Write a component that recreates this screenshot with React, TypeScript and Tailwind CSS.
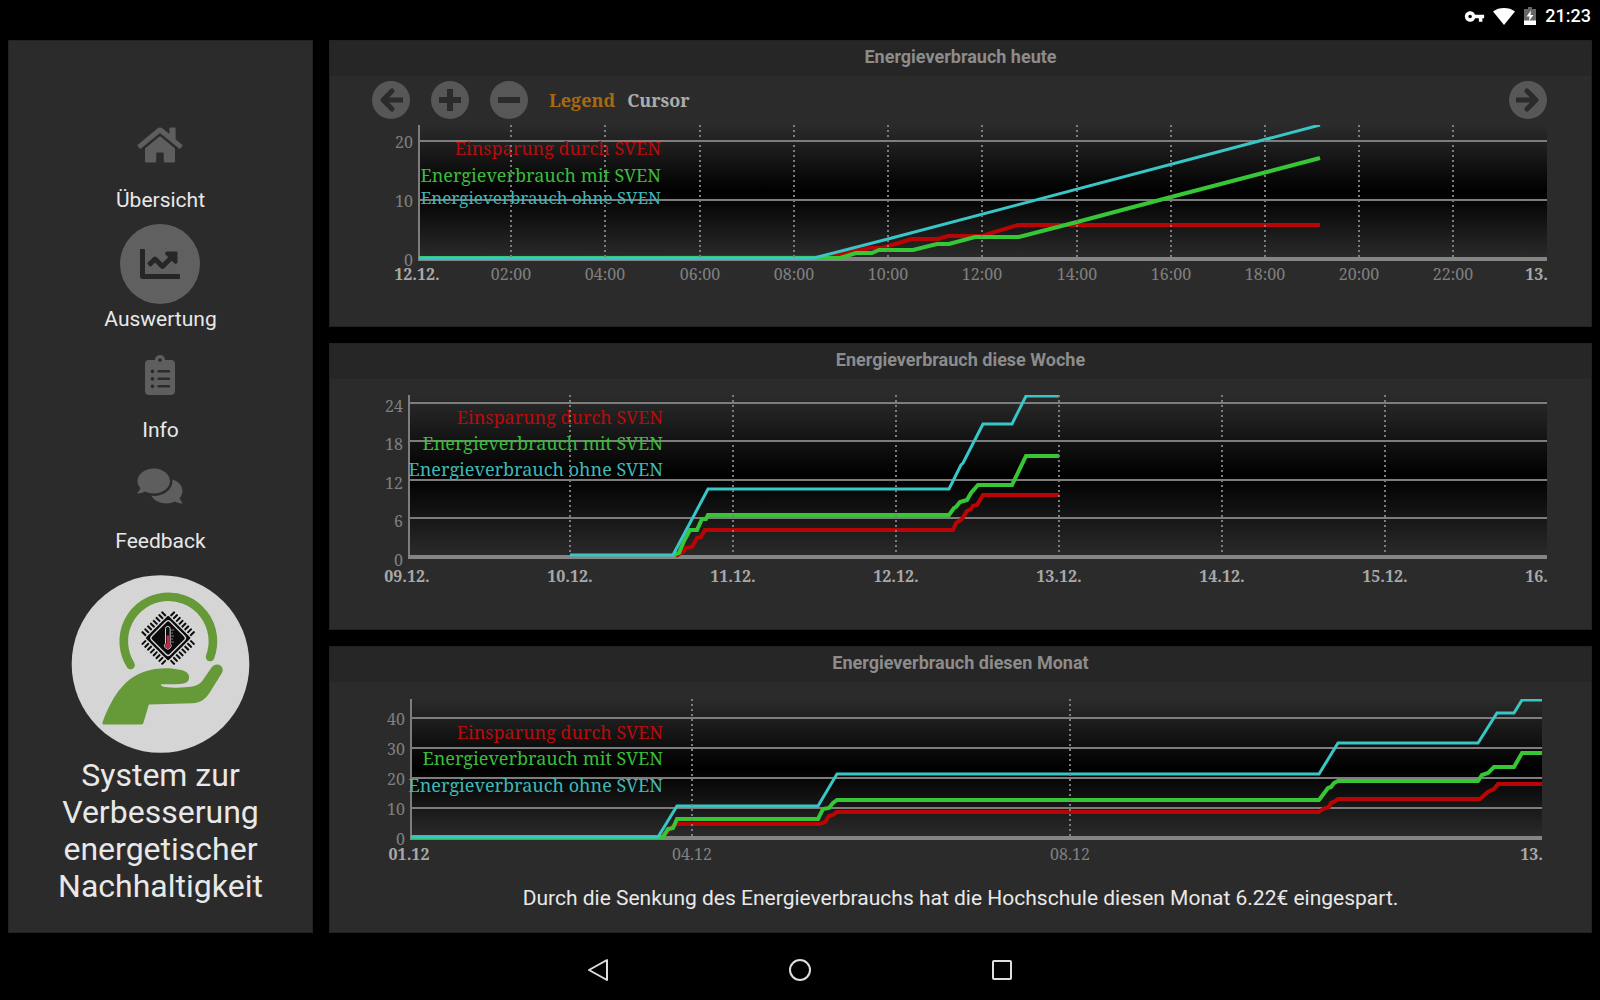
import type { ReactNode } from "react";
import { FaChartLine, FaClipboardList, FaComments, FaHome } from "react-icons/fa";
import { MdVpnKey } from "react-icons/md";

type Tick = { at: number; label: string; bold?: boolean; grid?: boolean; end?: boolean };

type ChartProps = {
  id: string;
  label: string;
  viewBox: string;
  plot: { left: number; right: number; top: number; base: number };
  yTicks: { at: number; label: string }[];
  yLabelDrop: number;
  xTicks: Tick[];
  xLabelY: number;
  legendX: number;
  legendY: [number, number, number];
  tightLegend?: boolean;
  series: { saved: string; withSven: string; withoutSven: string };
};

const serif = "font-['Noto_Serif','DejaVu_Serif_Condensed','DejaVu_Serif',serif]";

function Chart(props: ChartProps) {
  const { id, label, viewBox, plot, yTicks, yLabelDrop, xTicks, xLabelY, legendX, legendY, tightLegend, series } = props;
  const { left, right, top, base } = plot;
  return (
    <svg viewBox={viewBox} role="img" aria-label={label} className={`block w-full ${serif}`}>
      <defs>
        <linearGradient id={`${id}-bg`} x1="0" y1="0" x2="0" y2="1">
          <stop offset="0" stopColor="#2b2b2b" />
          <stop offset="0.5" stopColor="#000000" />
          <stop offset="1" stopColor="#2b2b2b" />
        </linearGradient>
        <clipPath id={`${id}-clip`}>
          <rect x={left - 1} y={top} width={right - left + 1} height={base - top + 2} />
        </clipPath>
      </defs>
      <rect x={left} y={top} width={right - left} height={base - top} fill={`url(#${id}-bg)`} />
      {yTicks.map((t) => (
        <g key={t.label}>
          {t.at !== base && <path d={`M${left - 1} ${t.at}H${right}`} stroke="#7d7d7d" strokeWidth="2" />}
          <text x={left - 6} y={t.at + yLabelDrop} textAnchor="end" className="fill-[#808080] text-[16px]">
            {t.label}
          </text>
        </g>
      ))}
      <path d={`M${left} ${top}V${base}`} stroke="#7d7d7d" strokeWidth="2" />
      <path d={`M${left - 1} ${base}H${right}`} stroke="#858585" strokeWidth="4" />
      {xTicks.map((t) => (
        <text
          key={t.label}
          x={t.at}
          y={xLabelY}
          textAnchor={t.end ? "end" : "middle"}
          className={t.bold ? "fill-[#a8a8a8] text-[16px] font-bold" : "fill-[#808080] text-[16px]"}
        >
          {t.label}
        </text>
      ))}
      <g className="text-[18px]" textAnchor="end">
        <text x={legendX} y={legendY[0]} className="fill-[#b80c0c]">Einsparung durch SVEN</text>
        <text x={legendX} y={legendY[1]} className="fill-[#3cbc3c]">Energieverbrauch mit SVEN</text>
        <text x={legendX} y={legendY[2]} className={tightLegend ? "fill-[#3fb8b8] text-[17px]" : "fill-[#3fb8b8]"}>
          Energieverbrauch ohne SVEN
        </text>
      </g>
      <g fill="none" strokeWidth="4" clipPath={`url(#${id}-clip)`}>
        <polyline points={series.saved} stroke="#bb0505" />
        <polyline points={series.withSven} stroke="#36c636" />
        <polyline points={series.withoutSven} stroke="#38c6c6" strokeWidth="3" />
      </g>
      {xTicks.filter((t) => t.grid).map((t) => (
        <path key={t.label} d={`M${t.at} ${top}V${base - 2}`} stroke="#7c7c7c" strokeWidth="2" strokeDasharray="2 3" />
      ))}
    </svg>
  );
}

function Panel({ title, children }: { title: string; children: ReactNode }) {
  return (
    <section className="flex flex-1 flex-col border border-[#222222] bg-[#2b2b2b]">
      <h2 className="bg-[#262626] pb-1 text-center text-[18px] leading-[31px] font-bold text-[#8c8c8c]">{title}</h2>
      {children}
    </section>
  );
}

function RoundButton({ label, end, children }: { label: string; end?: boolean; children: ReactNode }) {
  return (
    <button type="button" aria-label={label} className={end ? "ml-auto rounded-full" : "rounded-full"}>
      <svg viewBox="-19 -19 38 38" className="block size-[38px]" fill="none" stroke="#2b2b2b" strokeWidth="5">
        <circle r="19" fill="#575757" stroke="none" />
        {children}
      </svg>
    </button>
  );
}

function NavItem({ icon, label, active }: { icon: ReactNode; label: string; active?: boolean }) {
  return (
    <button type="button" aria-current={active ? "page" : undefined} className="flex flex-col items-center">
      <span
        className={
          active
            ? "flex size-20 items-center justify-center rounded-full bg-[#606060] text-[#262626]"
            : "flex size-20 items-center justify-center text-[#5e5e5e]"
        }
      >
        {icon}
      </span>
      <span className="text-[21px] leading-[31px]">{label}</span>
    </button>
  );
}

const pins = [-42, -30, -18, -6, 6, 18, 30, 42];

function Logo() {
  return (
    <svg viewBox="92 43 538 534" role="img" aria-label="SVEN Logo" className="h-[178px] w-[179px]">
      <circle cx="361" cy="310" r="267" fill="#d5d5d5" />
      <path d="M271 313A134 134 0 1 1 510 289" fill="none" stroke="#669938" strokeWidth="26" strokeLinecap="round" />
      <path
        fill="#669938"
        d="M187 484C202 445 217 415 236 390C256 364 280 343 312 333C338 324 372 321 400 324C428 327 447 332 447 350C447 364 436 370 418 370C400 371 382 370 362 371C363 376 366 378 374 379C398 382 432 382 456 378C476 374 484 366 492 353L514 321C522 310 534 309 542 315C549 321 550 329 545 338L510 394C498 413 483 427 456 428L326 432L310 486C309 490 307 492 303 492H192C187 492 186 489 187 484Z"
      />
      <g transform="translate(384 232) rotate(45)">
        {[0, 90, 180, 270].map((angle) => (
          <g key={angle} transform={`rotate(${angle})`} fill="#0b0b0b">
            {pins.map((p) => (
              <rect key={p} x={p - 3} y="-70" width="6" height="18" rx="2" />
            ))}
          </g>
        ))}
        <rect x="-48" y="-48" width="96" height="96" rx="3" fill="#0b0b0b" />
        <rect x="-39" y="-39" width="78" height="78" rx="8" fill="none" stroke="#d5d5d5" strokeWidth="4" />
      </g>
      <path d="M376 248V204a7 7 0 0 1 14 0V248a10 10 0 1 1-14 0Z" fill="#0b0b0b" stroke="#d5d5d5" strokeWidth="3" />
      <path d="M383 224V254" stroke="#c02a4c" strokeWidth="7" />
      <circle cx="383" cy="256" r="8" fill="#c02a4c" />
      <path d="M393 208H402M393 217H399M393 226H402M393 235H399M393 244H402" stroke="#b5b5b5" strokeWidth="2" />
    </svg>
  );
}

export default function App() {
  return (
    <div className="flex min-h-screen flex-col bg-black font-[Roboto,sans-serif] text-[#e8e8e8]">
      <header className="flex h-10 items-start justify-end px-[9px] pt-1 text-white">
        <div className="flex h-6 items-center gap-2">
          <MdVpnKey className="size-[21px]" aria-label="VPN" />
          <svg viewBox="0 0 22 17" className="h-[17px] w-[22px]" role="img" aria-label="WLAN">
            <path d="M11 17L0 3.4C6 -1.1 16 -1.1 22 3.4Z" fill="currentColor" />
          </svg>
          <svg viewBox="0 0 12 18" className="mx-px h-[18px] w-3" role="img" aria-label="Akku wird geladen">
            <path d="M0 2H4V0H8V2H12V18H0Z" fill="#666666" />
            <path d="M0 13.5H12V18H0Z" fill="currentColor" />
            <path d="M7 3.5L2.5 9.5H5.5L5 14L9.5 8H6.5Z" fill="currentColor" />
          </svg>
          <time className="text-[18px] leading-6 font-medium">21:23</time>
        </div>
      </header>

      <main className="flex flex-1 gap-4 px-2">
        <aside className="flex w-[305px] shrink-0 flex-col items-center border border-[#222222] bg-[#2b2b2b] pt-16">
          <nav className="flex flex-col items-center">
            <div className="pb-2">
              <NavItem icon={<FaHome className="h-10 w-[46px]" />} label="Übersicht" />
            </div>
            <NavItem icon={<FaChartLine className="size-10" />} label="Auswertung" active />
            <NavItem icon={<FaClipboardList className="size-10" />} label="Info" />
            <NavItem icon={<FaComments className="h-10 w-[46px]" />} label="Feedback" />
          </nav>
          <div className="flex flex-col items-center pt-[18px]">
            <Logo />
            <p className="pt-1 text-center text-[32px] leading-[37px]">
              System zur
              <br />
              Verbesserung
              <br />
              energetischer
              <br />
              Nachhaltigkeit
            </p>
          </div>
        </aside>

        <div className="flex min-w-0 flex-1 flex-col gap-4">
          <Panel title="Energieverbrauch heute">
            <div className={`flex h-12 items-center gap-[21px] pr-11 pl-[42px] ${serif}`}>
              <RoundButton label="Zurück">
                <path d="M1 -9L-8 0L1 9" strokeLinecap="round" strokeLinejoin="round" />
                <path d="M-8 0H12" />
              </RoundButton>
              <RoundButton label="Vergrößern">
                <path d="M-11 0H11M0 -11V11" strokeWidth="6" />
              </RoundButton>
              <RoundButton label="Verkleinern">
                <path d="M-11 0H11" strokeWidth="6" />
              </RoundButton>
              <div className="flex gap-3 text-[18px] leading-6 font-bold">
                <button type="button" className="text-[#a86a10]">Legend</button>
                <button type="button" className="text-[#acacac]">Cursor</button>
              </div>
              <RoundButton label="Weiter" end>
                <path d="M-1 -9L8 0L-1 9" strokeLinecap="round" strokeLinejoin="round" />
                <path d="M8 0H-12" />
              </RoundButton>
            </div>
            <Chart
              id="today"
              label="Energieverbrauch heute"
              viewBox="330 124 1261 180"
              plot={{ left: 419, right: 1547, top: 125, base: 259 }}
              yTicks={[{ at: 141, label: "20" }, { at: 200, label: "10" }, { at: 259, label: "0" }]}
              yLabelDrop={7}
              xTicks={[
                { at: 417, label: "12.12.", bold: true },
                { at: 511, label: "02:00", grid: true },
                { at: 605, label: "04:00", grid: true },
                { at: 700, label: "06:00", grid: true },
                { at: 794, label: "08:00", grid: true },
                { at: 888, label: "10:00", grid: true },
                { at: 982, label: "12:00", grid: true },
                { at: 1077, label: "14:00", grid: true },
                { at: 1171, label: "16:00", grid: true },
                { at: 1265, label: "18:00", grid: true },
                { at: 1359, label: "20:00", grid: true },
                { at: 1453, label: "22:00", grid: true },
                { at: 1548, label: "13.", bold: true, end: true },
              ]}
              xLabelY={280}
              legendX={661}
              legendY={[155, 182, 204]}
              tightLegend
              series={{
                saved:
                  "419,258 820,257 840,254 846,252 861,250 870,248 882,248 912,239 938,239 948,236 982,236 1018,225 1320,225",
                withSven:
                  "419,258 840,258 856,253 872,253 879,250 913,250 937,244 949,244 975,237 1019,237 1077,222 1171,197 1320,158",
                withoutSven: "419,258 814,258 888,239 1320,125",
              }}
            />
          </Panel>

          <Panel title="Energieverbrauch diese Woche">
            <Chart
              id="week"
              label="Energieverbrauch diese Woche"
              viewBox="330 379 1261 220"
              plot={{ left: 409, right: 1547, top: 395, base: 557 }}
              yTicks={[
                { at: 403, label: "24" },
                { at: 441, label: "18" },
                { at: 480, label: "12" },
                { at: 518, label: "6" },
                { at: 557, label: "0" },
              ]}
              yLabelDrop={9}
              xTicks={[
                { at: 407, label: "09.12.", bold: true },
                { at: 570, label: "10.12.", bold: true, grid: true },
                { at: 733, label: "11.12.", bold: true, grid: true },
                { at: 896, label: "12.12.", bold: true, grid: true },
                { at: 1059, label: "13.12.", bold: true, grid: true },
                { at: 1222, label: "14.12.", bold: true, grid: true },
                { at: 1385, label: "15.12.", bold: true, grid: true },
                { at: 1548, label: "16.", bold: true, end: true },
              ]}
              xLabelY={582}
              legendX={663}
              legendY={[424, 450, 476]}
              series={{
                saved:
                  "676,556 684,551 686,548 692,547 697,538 701,537 705,530 953,530 956,523 962,519 967,511 971,509 973,506 977,505 983,495 1059,495",
                withSven:
                  "673,555 679,553 684,541 690,530 697,530 702,519 706,519 708,515 949,515 954,508 956,507 960,502 967,500 971,493 978,485 1012,485 1026,456 1059,456",
                withoutSven: "570,555 673,555 708,489 949,489 961,465 963,463 983,424 1012,424 1026,396 1059,396",
              }}
            />
          </Panel>

          <Panel title="Energieverbrauch diesen Monat">
            <Chart
              id="month"
              label="Energieverbrauch diesen Monat"
              viewBox="330 682 1261 190"
              plot={{ left: 411, right: 1542, top: 699, base: 838 }}
              yTicks={[
                { at: 718, label: "40" },
                { at: 748, label: "30" },
                { at: 778, label: "20" },
                { at: 808, label: "10" },
                { at: 838, label: "0" },
              ]}
              yLabelDrop={7}
              xTicks={[
                { at: 409, label: "01.12", bold: true },
                { at: 692, label: "04.12", grid: true },
                { at: 1070, label: "08.12", grid: true },
                { at: 1543, label: "13.", bold: true, end: true },
              ]}
              xLabelY={860}
              legendX={663}
              legendY={[739, 765, 792]}
              series={{
                saved:
                  "411,837 658,837 666,833 673,826 677,824 820,824 825,822 829,816 833,815 837,812 1319,812 1323,809 1329,807 1331,803 1334,802 1338,799 1480,799 1488,792 1494,789 1498,784 1542,784",
                withSven:
                  "411,837 663,837 668,829 673,828 677,819 818,819 823,809 829,808 833,803 837,800 1319,800 1328,788 1331,787 1334,783 1338,781 1478,781 1482,775 1488,773 1494,767 1514,767 1522,753 1542,753",
                withoutSven:
                  "411,837 658,837 677,806 818,806 837,774 1319,774 1338,743 1478,743 1497,713 1514,713 1522,700 1542,700",
              }}
            />
            <p className="pt-[10px] text-center text-[21px] leading-8">
              Durch die Senkung des Energieverbrauchs hat die Hochschule diesen Monat 6.22€ eingespart.
            </p>
          </Panel>
        </div>
      </main>

      <footer className="flex h-[67px] items-center justify-center gap-[178px] pt-1.5">
        <button type="button" aria-label="Zurück">
          <svg viewBox="0 0 24 24" className="size-6" fill="none" stroke="#dedede" strokeWidth="2">
            <path d="M21 2V22L3 12Z" strokeLinejoin="round" />
          </svg>
        </button>
        <button type="button" aria-label="Startbildschirm">
          <svg viewBox="0 0 24 24" className="size-6" fill="none" stroke="#dedede" strokeWidth="2">
            <circle cx="12" cy="12" r="10" />
          </svg>
        </button>
        <button type="button" aria-label="Letzte Apps">
          <svg viewBox="0 0 24 24" className="size-6" fill="none" stroke="#dedede" strokeWidth="2">
            <rect x="3" y="3" width="18" height="18" rx="1" />
          </svg>
        </button>
      </footer>
    </div>
  );
}
